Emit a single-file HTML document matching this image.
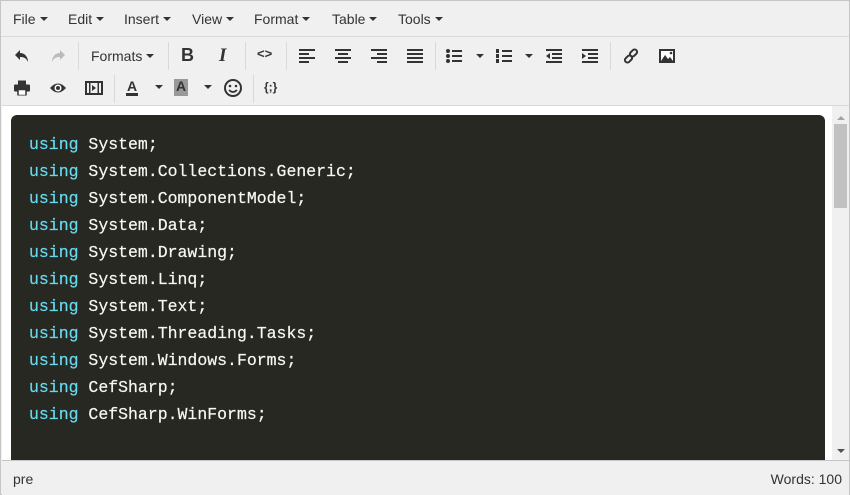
<!DOCTYPE html>
<html><head><meta charset="utf-8"><style>
*{margin:0;padding:0;box-sizing:border-box}
body{width:850px;height:495px;overflow:hidden;background:#fff;font-family:"Liberation Sans",sans-serif;color:#333}
#w{position:absolute;left:0;top:0;width:850px;height:495px;border:1px solid #c5c5c5;background:#f0f0f0}
.a{position:absolute}
.m{font-size:14px;top:10px}
.car{display:inline-block;width:0;height:0;border-left:4px solid transparent;border-right:4px solid transparent;border-top:4px solid #333;vertical-align:middle;margin-left:4px;margin-top:-2px}
.sep{position:absolute;width:1px;background:#d9d9d9}
.ic{position:absolute;transform:translate(-50%,-50%)}
#ed{position:absolute;left:1px;top:104px;width:847px;height:355px;background:#fff;border-top:1px solid #d9d9d9;overflow:hidden}
#pre{position:absolute;left:9px;top:9px;width:814px;height:360px;background:#272822;border-radius:6px}
.ln{position:absolute;left:18px;font-family:"Liberation Mono",monospace;font-size:16.5px;color:#f8f8f2;white-space:pre;-webkit-text-stroke:0.2px #f8f8f2}
.k{color:#66d9ef;-webkit-text-stroke:0.2px #66d9ef}
#sb{position:absolute;right:0;top:0;width:17px;height:355px;background:#f0f0f0}
#st{position:absolute;left:1px;top:459px;width:847px;height:35px;border-top:1px solid #c5c5c5;background:#f0f0f0;font-size:14px}
</style></head><body><div id="w">
<div class="a m" style="left:12px">File<span class="car"></span></div>
<div class="a m" style="left:67px">Edit<span class="car"></span></div>
<div class="a m" style="left:123px">Insert<span class="car"></span></div>
<div class="a m" style="left:191px">View<span class="car"></span></div>
<div class="a m" style="left:253px">Format<span class="car"></span></div>
<div class="a m" style="left:331px">Table<span class="car"></span></div>
<div class="a m" style="left:397px">Tools<span class="car"></span></div>
<div class="a" style="left:0;top:35px;width:848px;height:1px;background:#d9d9d9"></div>

<!-- row1 -->
<svg class="ic" style="left:21px;top:55px" width="16" height="14" viewBox="0 0 16 14"><path d="M6 1 L1 6 L6 11 V8 C10 8 12 9 14 13 C14 8 11 4 6 4 Z" fill="#333"/></svg>
<svg class="ic" style="left:57px;top:55px" width="16" height="14" viewBox="0 0 16 14"><path d="M10 1 L15 6 L10 11 V8 C6 8 4 9 2 13 C2 8 5 4 10 4 Z" fill="#bbb"/></svg>
<div class="sep" style="left:77px;top:41px;height:28px"></div>
<div class="a" style="left:90px;top:47px;font-size:14px">Formats<span class="car"></span></div>
<div class="sep" style="left:167px;top:41px;height:28px"></div>
<div class="a" style="left:180px;top:44px;font-size:18px;font-weight:bold">B</div>
<div class="a" style="left:218px;top:44px;font-size:19px;font-style:italic;font-family:'Liberation Serif',serif;font-weight:bold">I</div>
<div class="sep" style="left:244px;top:41px;height:28px"></div>
<div class="a" style="left:256px;top:45px;font-size:13px;font-weight:bold">&lt;&gt;</div>
<div class="sep" style="left:285px;top:41px;height:28px"></div>
<svg class="ic" style="left:306px;top:55px" width="16" height="14"><g fill="#333"><rect y="0" width="16" height="2"/><rect y="4" width="10" height="2"/><rect y="8" width="16" height="2"/><rect y="12" width="10" height="2"/></g></svg>
<svg class="ic" style="left:342px;top:55px" width="16" height="14"><g fill="#333"><rect y="0" width="16" height="2"/><rect x="3" y="4" width="10" height="2"/><rect y="8" width="16" height="2"/><rect x="3" y="12" width="10" height="2"/></g></svg>
<svg class="ic" style="left:378px;top:55px" width="16" height="14"><g fill="#333"><rect y="0" width="16" height="2"/><rect x="6" y="4" width="10" height="2"/><rect y="8" width="16" height="2"/><rect x="6" y="12" width="10" height="2"/></g></svg>
<svg class="ic" style="left:414px;top:55px" width="16" height="14"><g fill="#333"><rect y="0" width="16" height="2"/><rect y="4" width="16" height="2"/><rect y="8" width="16" height="2"/><rect y="12" width="16" height="2"/></g></svg>
<div class="sep" style="left:434px;top:41px;height:28px"></div>
<svg class="ic" style="left:453px;top:55px" width="16" height="14"><g fill="#333"><circle cx="2" cy="2" r="2"/><circle cx="2" cy="7" r="2"/><circle cx="2" cy="12" r="2"/><rect x="6" y="1" width="10" height="2"/><rect x="6" y="6" width="10" height="2"/><rect x="6" y="11" width="10" height="2"/></g></svg>
<span class="a car" style="left:471px;top:55px"></span>
<svg class="ic" style="left:503px;top:55px" width="16" height="14"><g fill="#333"><rect x="0" y="0" width="3" height="4"/><rect x="0" y="5" width="3" height="4"/><rect x="0" y="10" width="3" height="4"/><rect x="6" y="1" width="10" height="2"/><rect x="6" y="6" width="10" height="2"/><rect x="6" y="11" width="10" height="2"/></g></svg>
<span class="a car" style="left:520px;top:55px"></span>
<svg class="ic" style="left:553px;top:55px" width="16" height="14"><g fill="#333"><rect width="16" height="2"/><rect x="6" y="4" width="10" height="2"/><rect x="6" y="8" width="10" height="2"/><rect y="12" width="16" height="2"/><path d="M0 7 L4 4 V10Z"/></g></svg>
<svg class="ic" style="left:589px;top:55px" width="16" height="14"><g fill="#333"><rect width="16" height="2"/><rect x="6" y="4" width="10" height="2"/><rect x="6" y="8" width="10" height="2"/><rect y="12" width="16" height="2"/><path d="M4 7 L0 4 V10Z"/></g></svg>
<div class="sep" style="left:609px;top:41px;height:28px"></div>
<svg class="ic" style="left:630px;top:55px" width="16" height="16"><g fill="none" stroke="#333" stroke-width="2"><rect x="8" y="1" width="5" height="8" rx="2.5" transform="rotate(45 10.5 5)"/><rect x="3" y="7" width="5" height="8" rx="2.5" transform="rotate(45 5.5 11)"/></g></svg>
<svg class="ic" style="left:666px;top:55px" width="16" height="14"><rect x="1" y="1" width="14" height="12" fill="#fff" stroke="#333" stroke-width="2"/><path d="M2 12 L6 6 L9 10 L11 8 L14 12Z" fill="#333"/><circle cx="12" cy="4" r="1.3" fill="#333"/></svg>

<!-- row2 -->
<svg class="ic" style="left:21px;top:87px" width="16" height="15"><g fill="#333"><rect x="4" y="0" width="8" height="4"/><rect x="0" y="4" width="16" height="7" rx="1"/><rect x="4" y="9" width="8" height="6" fill="#fff" stroke="#333" stroke-width="1.5"/></g></svg>
<svg class="ic" style="left:57px;top:87px" width="16" height="12"><path d="M0 6 Q8 -3 16 6 Q8 15 0 6Z" fill="#333"/><circle cx="8" cy="6" r="3.5" fill="#fff"/><circle cx="8" cy="6" r="2" fill="#333"/></svg>
<svg class="ic" style="left:93px;top:87px" width="18" height="14"><rect x="1" y="1" width="16" height="12" fill="none" stroke="#333" stroke-width="2"/><g fill="#333"><rect x="4" y="1" width="1.5" height="12"/><rect x="12.5" y="1" width="1.5" height="12"/><path d="M7 4 L11 7 L7 10Z"/></g></svg>
<div class="sep" style="left:113px;top:74px;height:28px"></div>
<div class="a" style="left:125px;top:78px;font-size:14px;font-weight:bold;border-bottom:3px solid #333;line-height:14px;padding:0 1px">A</div>
<span class="a car" style="left:150px;top:86px"></span>
<div class="a" style="left:173px;top:78px;font-size:14px;font-weight:bold;background:#999;border-bottom:3px solid #999;line-height:14px;padding:0 2px">A</div>
<span class="a car" style="left:199px;top:86px"></span>
<svg class="ic" style="left:232px;top:87px" width="18" height="18"><circle cx="9" cy="9" r="8" fill="none" stroke="#333" stroke-width="2"/><circle cx="6" cy="7" r="1.3" fill="#333"/><circle cx="12" cy="7" r="1.3" fill="#333"/><path d="M5 11 Q9 15 13 11" fill="none" stroke="#333" stroke-width="1.6"/></svg>
<div class="sep" style="left:252px;top:74px;height:28px"></div>
<div class="a" style="left:263px;top:79px;font-size:12px;font-weight:bold">{;}</div>

<div id="ed">
<div id="pre">
<div class="ln" style="top:20px"><span class="k">using</span> System;</div>
<div class="ln" style="top:47px"><span class="k">using</span> System.Collections.Generic;</div>
<div class="ln" style="top:74px"><span class="k">using</span> System.ComponentModel;</div>
<div class="ln" style="top:101px"><span class="k">using</span> System.Data;</div>
<div class="ln" style="top:128px"><span class="k">using</span> System.Drawing;</div>
<div class="ln" style="top:155px"><span class="k">using</span> System.Linq;</div>
<div class="ln" style="top:182px"><span class="k">using</span> System.Text;</div>
<div class="ln" style="top:209px"><span class="k">using</span> System.Threading.Tasks;</div>
<div class="ln" style="top:236px"><span class="k">using</span> System.Windows.Forms;</div>
<div class="ln" style="top:263px"><span class="k">using</span> CefSharp;</div>
<div class="ln" style="top:290px"><span class="k">using</span> CefSharp.WinForms;</div>
</div>
<div id="sb">
<div class="a" style="left:5px;top:10px;border-left:4px solid transparent;border-right:4px solid transparent;border-bottom:4px solid #a3a3a3"></div>
<div class="a" style="left:2px;top:18px;width:13px;height:84px;background:#c1c1c1"></div>
<div class="a" style="left:5px;top:343px;border-left:4px solid transparent;border-right:4px solid transparent;border-top:4px solid #505050"></div>
</div>
</div>
<div id="st">
<div class="a" style="left:11px;top:10px">pre</div>
<div class="a" style="right:7px;top:10px">Words: 100</div>
</div>
</div></body></html>
